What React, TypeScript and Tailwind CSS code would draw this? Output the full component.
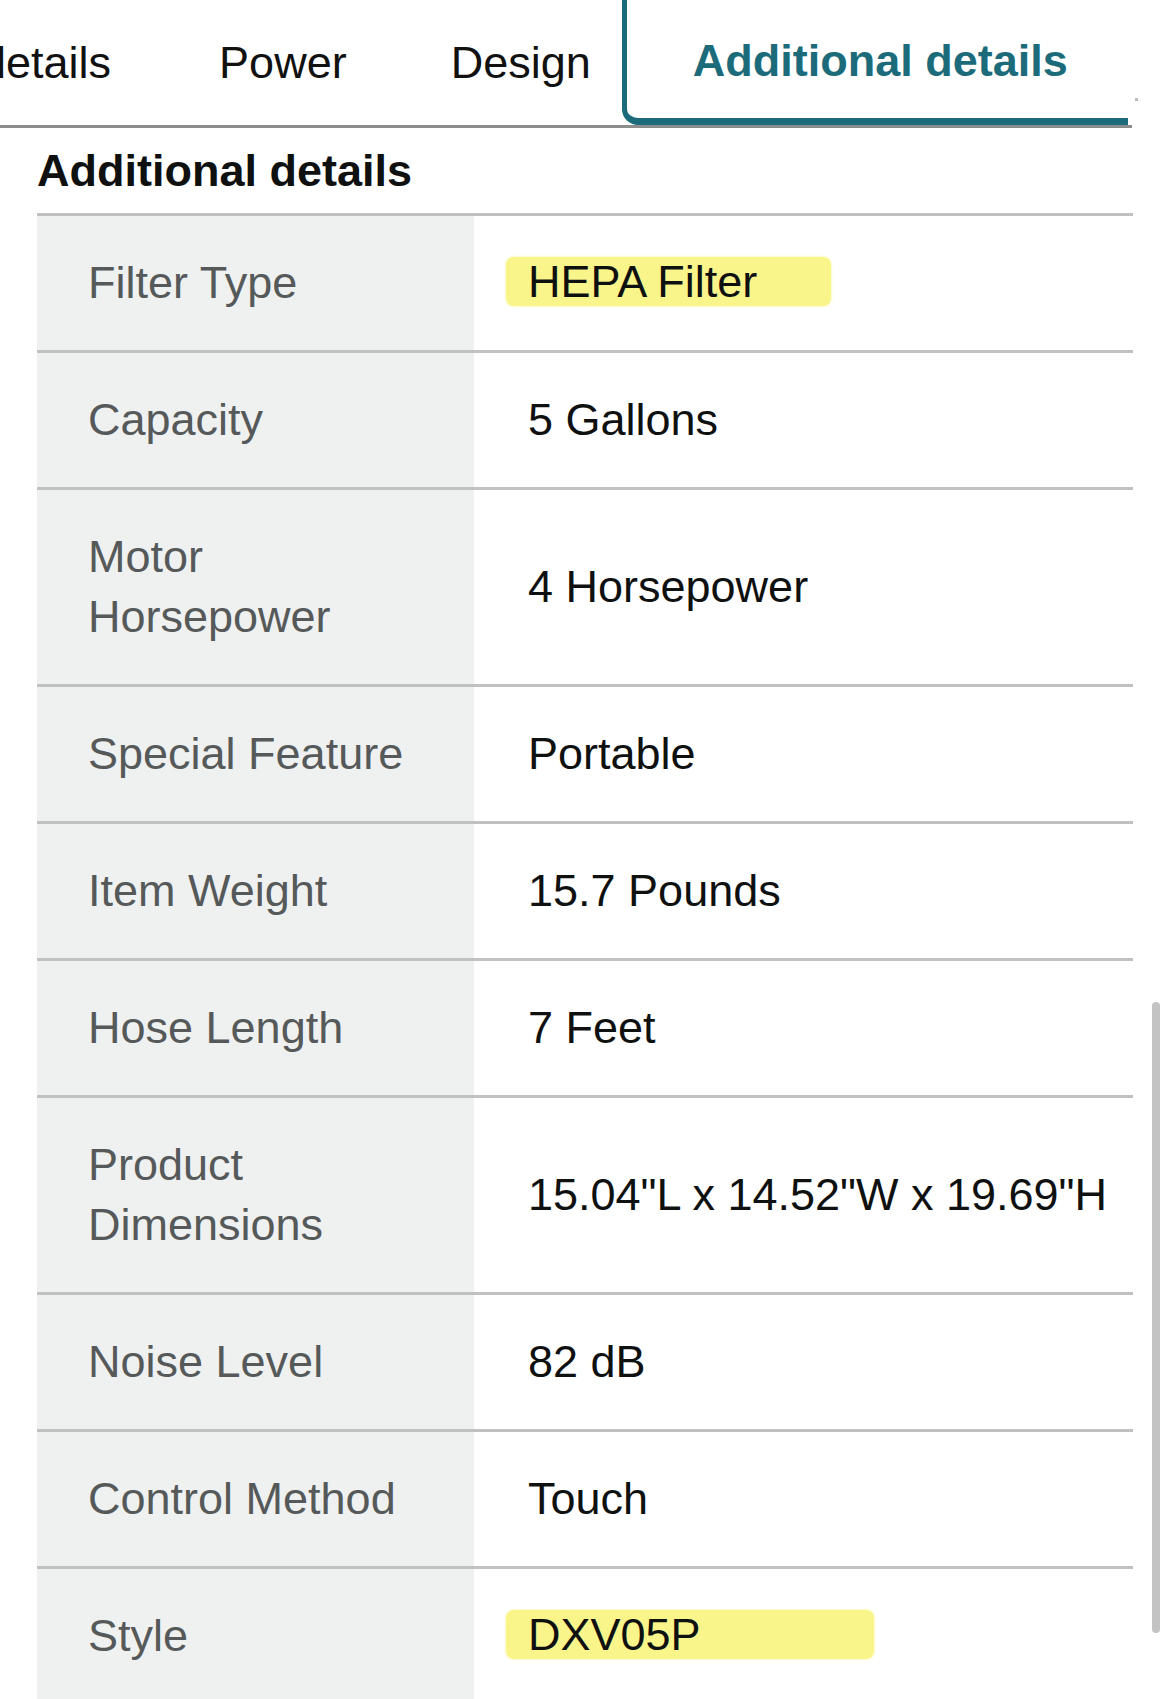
import React from 'react'

type Row = {
    label: string
    value: string
    tall?: boolean
    mark?: number // width of the yellow marker, when the value is highlighted
}

const rows: Row[] = [
    { label: 'Filter Type', value: 'HEPA Filter', mark: 325 },
    { label: 'Capacity', value: '5 Gallons' },
    { label: 'Motor Horsepower', value: '4 Horsepower', tall: true },
    { label: 'Special Feature', value: 'Portable' },
    { label: 'Item Weight', value: '15.7 Pounds' },
    { label: 'Hose Length', value: '7 Feet' },
    { label: 'Product Dimensions', value: '15.04"L x 14.52"W x 19.69"H', tall: true },
    { label: 'Noise Level', value: '82 dB' },
    { label: 'Control Method', value: 'Touch' },
    { label: 'Style', value: 'DXV05P', mark: 368 },
]

function SpecRow({ row }: { row: Row }) {
    return (
        <div
            className={`grid grid-cols-[437px_1fr] border-t-[3px] border-[#c0c1c1] ${
                row.tall ? 'h-[197px]' : 'h-[137px]'
            }`}
        >
            <div className="flex items-center bg-[#eff0f0] pl-[51px] pr-[40px] text-[#565959] leading-[60px]">
                {row.label}
            </div>
            <div className="flex items-center pl-[54px] pr-[8px] text-[#0f1111] whitespace-nowrap">
                {row.mark ? (
                    <span
                        className="-ml-[22px] -mt-[4px] inline-block rounded-[8px] bg-[#faf58a] pl-[22px] leading-[49px] shadow-[0_0_3px_#faf58a]"
                        style={{ width: row.mark }}
                    >
                        {row.value}
                    </span>
                ) : (
                    row.value
                )}
            </div>
        </div>
    )
}

export default function App() {
    return (
        <div
            className="relative h-[1699px] w-[1170px] overflow-hidden bg-white text-[45px]"
            style={{ fontFamily: '"Liberation Sans", Arial, sans-serif' }}
        >
            {/* tab strip */}
            <div className="flex h-[128px] w-[1132px] items-stretch border-b-[3px] border-[#8d8d8d] text-[#111]">
                <span className="-ml-[119px] flex items-center whitespace-nowrap">Item details</span>
                <span className="ml-[108px] flex items-center">Power</span>
                <span className="ml-[104px] flex items-center">Design</span>
                <div className="-mt-[16px] ml-[31px] flex w-[506px] items-center rounded-l-[16px] border-t-[5px] border-b-[7px] border-l-[5px] border-[#1c6b7b] pl-[66px] pt-[14px] font-bold text-[#1c6b7b] whitespace-nowrap">
                    Additional details
                </div>
            </div>
            <div className="absolute left-[1135px] top-[98px] h-[3px] w-[3px] bg-[#bbb]" />

            <div className="flex h-[85px] items-center pl-[37px] font-bold text-[#0f1111]">
                Additional details
            </div>

            <div className="ml-[37px] w-[1096px]">
                {rows.map((r) => (
                    <SpecRow key={r.label} row={r} />
                ))}
            </div>

            {/* scrollbar thumb */}
            <div className="absolute left-[1152px] top-[1002px] h-[631px] w-[8px] rounded-full bg-[#c3c3c3]" />
        </div>
    )
}
